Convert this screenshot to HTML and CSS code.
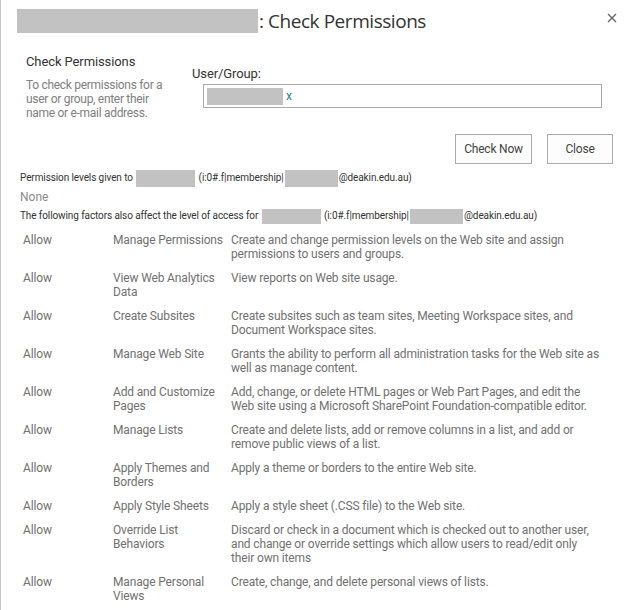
FILE: index.html
```html
<!DOCTYPE html>
<html>
<head>
<meta charset="utf-8">
<link rel="stylesheet" href="styles.css">
</head>
<body>
<div class="dialog">
  <header class="title-bar">
    <h1 class="title"><span class="redact title-redact"></span>: Check Permissions</h1>
    <button class="close-x" aria-label="Close">
      <svg width="10" height="10" viewBox="0 0 10 10"><path d="M1 1 L9 9 M9 1 L1 9" stroke="#666" stroke-width="1.4" fill="none"/></svg>
    </button>
  </header>

  <section class="form">
    <div class="side">
      <h2 class="side-head">Check Permissions</h2>
      <p class="side-desc">To check permissions for a<br>user or group, enter their<br>name or e-mail address.</p>
    </div>
    <div class="field">
      <label class="field-label">User/Group:</label>
      <div class="picker"><span class="redact picker-redact"></span><span class="picker-x">x</span></div>
    </div>
  </section>

  <div class="actions">
    <button class="btn btn-check">Check Now</button>
    <button class="btn btn-close">Close</button>
  </div>

  <p class="info">Permission levels given to <span class="redact r1"></span> (i:0#.f|membership|<span class="redact r2"></span>@deakin.edu.au)</p>
  <p class="none">None</p>
  <p class="info info-2">The following factors also affect the level of access for <span class="redact r1"></span> (i:0#.f|membership|<span class="redact r2"></span>@deakin.edu.au)</p>

  <div class="perms">
    <div class="row"><span class="c-allow">Allow</span><span class="c-name">Manage Permissions</span><span class="c-desc">Create and change permission levels on the Web site and assign<br>permissions to users and groups.</span></div>
    <div class="row"><span class="c-allow">Allow</span><span class="c-name">View Web Analytics<br>Data</span><span class="c-desc">View reports on Web site usage.</span></div>
    <div class="row"><span class="c-allow">Allow</span><span class="c-name">Create Subsites</span><span class="c-desc">Create subsites such as team sites, Meeting Workspace sites, and<br>Document Workspace sites.</span></div>
    <div class="row"><span class="c-allow">Allow</span><span class="c-name">Manage Web Site</span><span class="c-desc">Grants the ability to perform all administration tasks for the Web site as<br>well as manage content.</span></div>
    <div class="row"><span class="c-allow">Allow</span><span class="c-name">Add and Customize<br>Pages</span><span class="c-desc">Add, change, or delete HTML pages or Web Part Pages, and edit the<br>Web site using a Microsoft SharePoint Foundation-compatible editor.</span></div>
    <div class="row"><span class="c-allow">Allow</span><span class="c-name">Manage Lists</span><span class="c-desc">Create and delete lists, add or remove columns in a list, and add or<br>remove public views of a list.</span></div>
    <div class="row"><span class="c-allow">Allow</span><span class="c-name">Apply Themes and<br>Borders</span><span class="c-desc">Apply a theme or borders to the entire Web site.</span></div>
    <div class="row"><span class="c-allow">Allow</span><span class="c-name">Apply Style Sheets</span><span class="c-desc">Apply a style sheet (.CSS file) to the Web site.</span></div>
    <div class="row"><span class="c-allow">Allow</span><span class="c-name">Override List<br>Behaviors</span><span class="c-desc">Discard or check in a document which is checked out to another user,<br>and change or override settings which allow users to read/edit only<br>their own items</span></div>
    <div class="row"><span class="c-allow">Allow</span><span class="c-name">Manage Personal<br>Views</span><span class="c-desc">Create, change, and delete personal views of lists.</span></div>
  </div>
</div>
</body>
</html>
```

FILE: styles.css
```css
html, body {
  margin: 0;
  padding: 0;
  background: #fff;
}
body {
  font-family: Roboto, "Liberation Sans", sans-serif;
  color: #444;
}
.dialog {
  border-left: 1px solid #c6c6c6;
  height: 610px;
  box-sizing: border-box;
  overflow: hidden;
}
.redact {
  display: inline-block;
  background: #c2c2c2;
  vertical-align: middle;
}
.title-bar {
  display: flex;
  justify-content: space-between;
  align-items: flex-start;
  padding: 9px 15px 0 16px;
}
.title {
  margin: 0;
  font-family: "Open Sans", "Noto Sans", sans-serif;
  font-size: 19px;
  font-weight: 400;
  line-height: 24px;
  color: #333;
  display: flex;
  align-items: center;
  letter-spacing: -0.45px;
}
.title-redact {
  width: 241px;
  height: 24px;
  margin-right: 1px;
}
.close-x {
  border: 0;
  background: none;
  padding: 0;
  margin-top: 4px;
  width: 10px;
  height: 10px;
  display: block;
}
.close-x svg { display: block; }

.form {
  display: flex;
  align-items: flex-start;
  padding: 20px 0 0 25px;
}
.side {
  width: 166px;
}
.side-head {
  margin: 0;
  font-size: 13px;
  font-weight: 400;
  line-height: 17px;
  color: #333;
  letter-spacing: -0.1px;
}
.side-desc {
  margin: 8px 0 0 0;
  font-size: 12px;
  line-height: 14px;
  color: #808080;
  letter-spacing: -0.3px;
}
.field {
  padding-top: 12px;
}
.field-label {
  display: block;
  font-size: 13px;
  line-height: 17px;
  color: #333;
  letter-spacing: -0.1px;
}
.picker {
  margin: 2px 0 0 11px;
  width: 394px;
  height: 22px;
  border: 1px solid #ababab;
  display: flex;
  align-items: center;
  padding-left: 3px;
}
.picker-redact {
  width: 76px;
  height: 17px;
}
.picker-x {
  color: #1a8a8a;
  font-size: 12px;
  margin-left: 3px;
  line-height: 14px;
}

.actions {
  display: flex;
  justify-content: flex-end;
  gap: 15px;
  padding: 14px 19px 0 0;
}
.btn {
  font-family: inherit;
  font-size: 12px;
  color: #444;
  background: #fdfdfd;
  border: 1px solid #ababab;
  height: 30px;
  padding: 0;
  letter-spacing: -0.2px;
}
.btn-check { width: 77px; }
.btn-close { width: 66px; }

.info {
  margin: 5px 0 0 19px;
  font-size: 10px;
  line-height: 17px;
  color: #333;
  letter-spacing: -0.1px;
}
.info .r1 { width: 59px; height: 17px; margin: 0 1px; }
.info .r2 { width: 53px; height: 17px; margin: 0 1px; }
.none {
  margin: 2px 0 0 19px;
  font-size: 12px;
  line-height: 17px;
  color: #8a8a8a;
}
.info-2 { margin-top: 1px; }
.info-2 .redact { height: 15px; }

.perms {
  padding: 9px 0 0 22px;
  font-size: 12px;
  line-height: 14px;
  color: #717171;
  letter-spacing: -0.15px;
}
.row {
  display: grid;
  grid-template-columns: 90px 118px 1fr;
  padding-bottom: 10px;
}
```
